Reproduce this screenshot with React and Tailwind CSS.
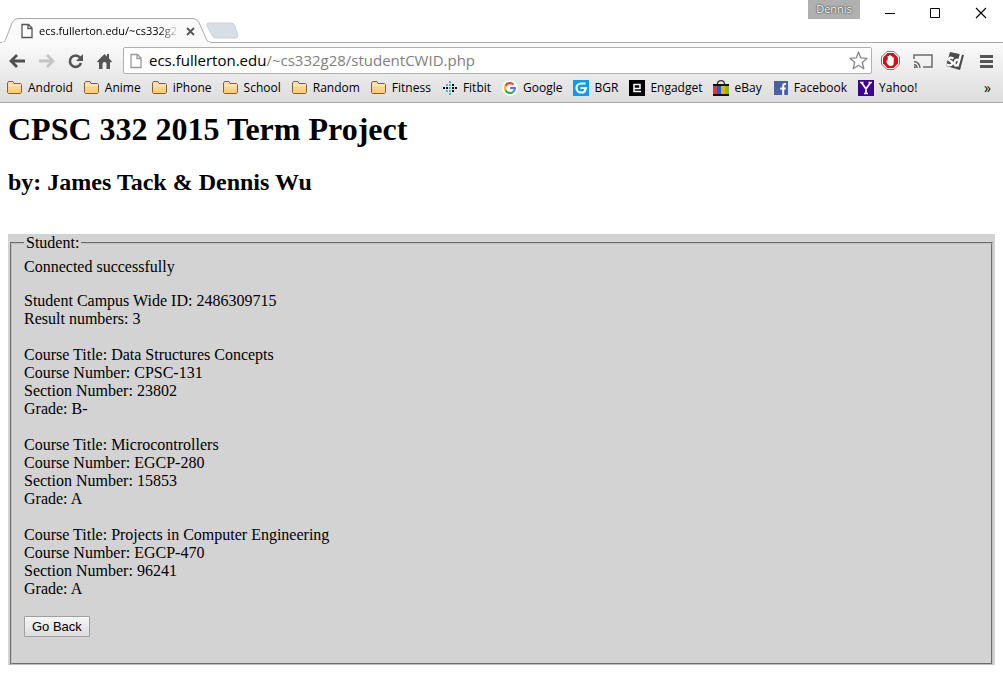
import React from "react";

function Folder() {
  return (
    <svg width="16" height="16" viewBox="0 0 16 16" aria-hidden="true" className="shrink-0">
      <defs>
        <linearGradient id="folder-fill" x1="0" y1="0" x2="0" y2="1">
          <stop offset="0" stopColor="#ffe3ac" />
          <stop offset="1" stopColor="#f9c876" />
        </linearGradient>
      </defs>
      <path d="M.5 12.500v-9.500l1-1.500H6l1 2h6.500l1 1v8l-1 1h-12z" fill="url(#folder-fill)" stroke="#80603c" />
      <path d="M1.500 5.500h12.500" stroke="#fff0cb" />
    </svg>
  );
}

function Page({ className }) {
  return (
    <svg width="12" height="16" viewBox="0 0 12 16" fill="#fff" stroke="currentColor" strokeWidth="1.300" aria-hidden="true" className={className}>
      <path d="M1 1.500h6.500L11 5v9.500H1zM7 1.500V5.500h4" />
    </svg>
  );
}

function Fitbit() {
  const dots = [
    [7, 1, 0], [4, 4, 0], [7, 4, 0], [10, 4, 1], [1, 7, 1], [4, 7, 1], [7, 7, 0], [10, 7, 1], [13, 7, 1],
    [4, 10, 0], [7, 10, 0], [10, 10, 1], [7, 13, 0],
  ];
  return (
    <svg width="16" height="16" viewBox="0 0 16 16" aria-hidden="true" className="shrink-0">
      {dots.map(([x, y, dark]) => (
        <rect key={`${x}-${y}`} x={x} y={y} width="2" height="2" fill={dark ? "#111" : "#38c0c4"} />
      ))}
    </svg>
  );
}

function Google() {
  return (
    <svg width="16" height="16" viewBox="0 0 16 16" aria-hidden="true" className="shrink-0">
      <circle cx="8" cy="8" r="8" fill="#fff" />
      <g fill="none" strokeWidth="2.200">
        <path d="M11.500 4.500A5 5 0 0 0 3.500 5.900" stroke="#ea4335" />
        <path d="M3.500 5.900a5 5 0 0 0 0 4.300" stroke="#fbbc05" />
        <path d="M3.500 10.200A5 5 0 0 0 11.300 11.700" stroke="#34a853" />
        <path d="M11.300 11.700A5 5 0 0 0 13 8H8" stroke="#4285f4" />
      </g>
    </svg>
  );
}

function Bgr() {
  return (
    <svg width="16" height="16" viewBox="0 0 16 16" aria-hidden="true" className="shrink-0">
      <path fill="#0a9cf5" d="M0 0h16v16H0z" />
      <path d="M12.500 3.500H8a4.500 4.500 0 0 0 0 9h1q3 0 3.500-3.500M7.500 8H14" fill="none" stroke="#fff" strokeWidth="2.200" />
    </svg>
  );
}

function Engadget() {
  return (
    <svg width="16" height="16" viewBox="0 0 16 16" aria-hidden="true" className="shrink-0">
      <path d="M0 0h16v16H0z" />
      <path d="M5 8.500h6V4.500H5v7h7" fill="none" stroke="#fff" strokeWidth="1.500" />
    </svg>
  );
}

function Ebay() {
  return (
    <svg width="16" height="16" viewBox="0 0 16 16" aria-hidden="true" className="shrink-0">
      <path d="M4.500 5V3.500Q5 .7 8 .7t3.500 2.800V5" fill="none" stroke="#333" strokeWidth="1.200" />
      <path fill="#111" d="M0 4h16v2H0z" />
      <path fill="#e53238" d="M0 6h4v8H0z" />
      <path fill="#0064d2" d="M4 6h4v8H4z" />
      <path fill="#f5af02" d="M8 6h4v8H8z" />
      <path fill="#86b817" d="M12 6h4v8h-4z" />
      <path fill="#111" d="M0 14h16v2H0z" />
    </svg>
  );
}

function Facebook() {
  return (
    <svg width="16" height="16" viewBox="0 0 16 16" aria-hidden="true" className="shrink-0">
      <path fill="#4862a3" d="M1 1h14v14H1z" />
      <path d="M13 4h-1q-1.800 0-1.800 2v9M7.200 8.500h5.500" fill="none" stroke="#fff" strokeWidth="2" />
    </svg>
  );
}

function Yahoo() {
  return (
    <svg width="16" height="16" viewBox="0 0 16 16" aria-hidden="true" className="shrink-0">
      <path fill="#400090" d="M0 0h16v16H0z" />
      <path d="M3.500 2.500 8 9l4.500-6.500M8 8.500V14M2 2.500h3.500M10.500 2.500H14M6 13.500h4" fill="none" stroke="#fff" strokeWidth="1.700" />
    </svg>
  );
}

const bookmarks = [
  ["Android", Folder], ["Anime", Folder], ["iPhone", Folder], ["School", Folder], ["Random", Folder],
  ["Fitness", Folder], ["Fitbit", Fitbit], ["Google", Google], ["BGR", Bgr], ["Engadget", Engadget],
  ["eBay", Ebay], ["Facebook", Facebook], ["Yahoo!", Yahoo],
];

const courses = [
  { title: "Data Structures Concepts", number: "CPSC-131", section: "23802", grade: "B-" },
  { title: "Microcontrollers", number: "EGCP-280", section: "15853", grade: "A" },
  { title: "Projects in Computer Engineering", number: "EGCP-470", section: "96241", grade: "A" },
];

function TitleBar() {
  return (
    <div className="flex h-[42px] items-start justify-between">
      <div className="flex pt-[18px]">
        <div className="relative z-10 h-[25px] w-[211px]">
          <svg width="211" height="25" viewBox="0 0 211 25" aria-hidden="true" className="absolute inset-0">
            <path d="M0 24.500h1c3 0 4-1 5-4L12 5Q14 .5 18 .5H193q4 0 6 4l7 16q1 4 5 4" fill="#fafafa" stroke="#a9a9a9" />
            <path d="M2 24.500h208" stroke="#fafafa" />
          </svg>
          <div className="relative flex h-[26px] items-center pl-[21px] text-[11px]">
            <Page className="shrink-0 text-[#555]" />
            <span className="ml-[6px] w-[141px] bg-linear-to-r from-black from-85% to-transparent bg-clip-text whitespace-nowrap text-transparent">
              ecs.fullerton.edu/~cs332g2
            </span>
            <button aria-label="Close tab" className="ml-[6px] flex h-4 w-4 items-center">
              <svg width="9" height="9" viewBox="0 0 9 9" stroke="#555" strokeWidth="1.800"><path d="m1 1 7 7M8 1 1 8" /></svg>
            </button>
          </div>
        </div>
        <button aria-label="New tab" className="-ml-[6px] mt-1 h-[18px]">
          <svg width="34" height="18" viewBox="0 0 34 18"><path d="M4 1h22q3 0 4 3l3 10q0 2-3 2H11q-3 0-4-3L2 4q-1-3 2-3" fill="#d8dde6" stroke="#cbd0d8" /></svg>
        </button>
      </div>
      <div className="flex items-start">
        <button className="h-[19px] w-[52px] bg-[#b0b0b0] pb-px text-[11px] leading-[18px] text-white [text-shadow:0_0_2px_#333,0_0_1px_#333]">Dennis</button>
        <button aria-label="Minimize" className="ml-[23px] flex h-[26px] w-[14px] items-center justify-center">
          <svg width="10" height="10" viewBox="0 0 10 10" stroke="#000"><path d="M0 5.500h10" /></svg>
        </button>
        <button aria-label="Maximize" className="ml-[31px] flex h-[26px] w-[14px] items-center justify-center">
          <svg width="10" height="10" viewBox="0 0 10 10" fill="none" stroke="#000"><path d="M.5.5h9v9h-9z" /></svg>
        </button>
        <button aria-label="Close" className="mr-[15px] ml-[32px] flex h-[26px] w-[14px] items-center justify-center">
          <svg width="12" height="12" viewBox="0 0 12 12" stroke="#000" strokeWidth="1.100"><path d="m1 1 10 10M11 1 1 11" /></svg>
        </button>
      </div>
    </div>
  );
}

function Toolbar() {
  return (
    <div className="flex h-[35px] items-center pr-[9px] pl-[9px]">
      <button aria-label="Back">
        <svg width="17" height="16" viewBox="0 0 17 16" fill="none" stroke="#505050" strokeWidth="2.800"><path d="M16 8H3M8 2 2 8l6 6" /></svg>
      </button>
      <button aria-label="Forward" className="ml-3">
        <svg width="17" height="16" viewBox="0 0 17 16" fill="none" stroke="#c4c4c4" strokeWidth="2.800"><path d="M1 8h13M9 2l6 6-6 6" /></svg>
      </button>
      <button aria-label="Reload" className="ml-3">
        <svg width="17" height="16" viewBox="0 0 17 16"><path d="M13 4.500A5.700 5.700 0 1 0 14 10" fill="none" stroke="#555" strokeWidth="2.600" /><path d="M16 1v7H9z" fill="#555" /></svg>
      </button>
      <button aria-label="Home" className="ml-3">
        <svg width="17" height="16" viewBox="0 0 17 16" fill="#555"><path d="M8.500 1 1 8.500l1 1 1-.8V16h3.500v-5q0-2 2-2t2 2v5H14V8.700l1 .8 1-1-3-3V1h-2v2.500z" /></svg>
      </button>
      <div className="ml-[10px] flex h-[27px] min-w-0 flex-1 items-center rounded-[2px] border border-[#b0b0b0] bg-white pr-[3px] pl-[6px]">
        <Page className="shrink-0 text-[#999]" />
        <div className="relative ml-[7px] h-full min-w-0 flex-1 text-[15px] leading-[25px]">
          <div aria-hidden="true" className="truncate text-[#808080]"><span className="text-black">ecs.fullerton.edu</span>/~cs332g28/studentCWID.php</div>
          <input aria-label="Address" defaultValue="ecs.fullerton.edu/~cs332g28/studentCWID.php" className="absolute inset-0 w-full bg-transparent text-transparent outline-none" />
        </div>
        <button aria-label="Bookmark this page">
          <svg width="19" height="19" viewBox="0 0 19 19" fill="#fff" stroke="#888" strokeWidth="1.300" strokeLinejoin="round"><path d="m9.500 1 2.300 5.900 6.200.4-4.700 4.200 1.500 6.200-5.300-3.400-5.300 3.400 1.500-6.200L1 7.300l6.200-.4z" /></svg>
        </button>
      </div>
      <button aria-label="Ad blocker" className="ml-[9px]">
        <svg width="19" height="19" viewBox="0 0 19 19"><path d="M6 .5h7L18.500 6v7L13 18.500H6L.5 13V6z" fill="#fff" stroke="#777" /><path d="M6.500 2h6L17 6.500v6L12.500 17h-6L2 12.500v-6z" fill="#d80d16" /><path d="M5.500 9.500h1.200V5h1.500V4h1.500v1h1.500v1.200h1.500V12q0 3-3 3Q7 15 5.500 11z" fill="#fff" /></svg>
      </button>
      <button aria-label="Cast" className="ml-[13px]">
        <svg width="20" height="16" viewBox="0 0 20 16" fill="none" stroke="#6b6b6b" strokeWidth="1.500"><path d="M1 6V2h18v12h-9M1 8.500Q6.500 9 7 15M1 11.500Q4 12 4 15" /><path d="M1 13v2h2q0-2-2-2" fill="#6b6b6b" stroke="none" /></svg>
      </button>
      <button aria-label="SD extension" className="ml-3">
        <svg width="20" height="20" viewBox="0 0 20 20">
          <path d="m5 1 14 3-4 15L1 15z" fill="#4c4c4c" />
          <path d="M8.500 7.500Q4.500 5.500 4 8q-.2 1.500 1.800 2.300Q8 11.500 7 13.200 5.500 15.500 1.500 13.500M13.500 9.200q-2.500-1.200-3.700 1.300T10.500 14.500q2 .3 2.700-2M12.500 15.500 16 3" fill="none" stroke="#fff" strokeWidth="2.300" />
        </svg>
      </button>
      <button aria-label="Menu" className="ml-[14px]">
        <svg width="15" height="14" viewBox="0 0 15 14" fill="#555"><path d="M1 1h13v3H1zM1 6h13v3H1zM1 11h13v3H1z" /></svg>
      </button>
    </div>
  );
}

export default function App() {
  return (
    <div className="min-h-screen bg-white text-black">
      <header className="font-['Open_Sans','Noto_Sans',sans-serif]">
        <TitleBar />
        <div className="border-y border-[#a9a9a9] bg-linear-to-b from-[#fafafa] to-[#dddddd]">
          <Toolbar />
          <nav aria-label="Bookmarks" className="flex h-[24px] items-center gap-[11px] pr-3 pb-1 pl-[7px] text-xs">
            {bookmarks.map(([name, Icon]) => (
              <a key={name} href="#" className="flex items-center gap-[5px] whitespace-nowrap">
                <Icon />{name}
              </a>
            ))}
            <button aria-label="More bookmarks" className="ml-auto text-[14px]">»</button>
          </nav>
        </div>
      </header>
      <main className="px-2 font-['Liberation_Serif',serif] text-[16px] leading-[18px]">
        <h1 className="pt-2 text-[32px] leading-[36px] font-bold">CPSC 332 2015 Term Project</h1>
        <h2 className="mt-[22px] text-[24px] leading-[27px] font-bold">by: James Tack &amp; Dennis Wu</h2>
        <section className="mt-[38px] bg-[#d3d3d3] px-[2px]">
          <fieldset className="border-2 border-[#c0c0c0] px-3 pt-[6px] pb-[26px] [border-style:groove]">
            <legend className="px-[2px]">Student:</legend>
            <p>Connected successfully</p>
            <p className="mt-4">Student Campus Wide ID: 2486309715<br />Result numbers: 3</p>
            {courses.map((c) => (
              <p key={c.number} className="mt-[18px]">
                Course Title: {c.title}<br />
                Course Number: {c.number}<br />
                Section Number: {c.section}<br />
                Grade: {c.grade}
              </p>
            ))}
            <button className="mt-[18px] block h-[21px] rounded-[1px] border border-[#a0a0a0] bg-linear-to-b from-[#f6f6f6] to-[#dddddd] px-[7px] font-['Liberation_Sans',sans-serif] text-[13px] leading-[19px]">Go Back</button>
          </fieldset>
        </section>
      </main>
    </div>
  );
}
